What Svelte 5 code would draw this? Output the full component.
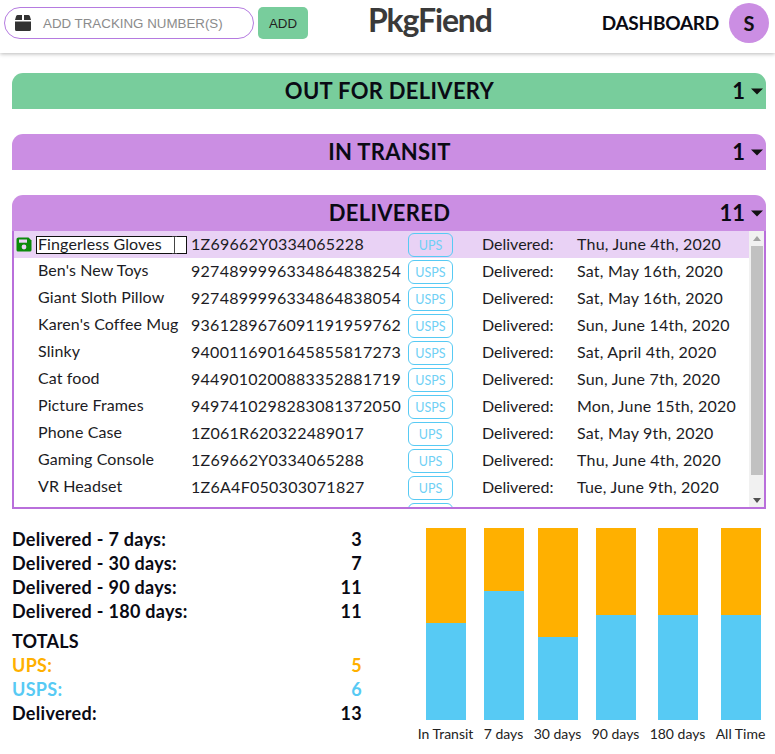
<script>
  const rows = [
    { name: 'Fingerless Gloves', num: '1Z69662Y0334065228', carrier: 'UPS', date: 'Thu, June 4th, 2020' },
    { name: "Ben's New Toys", num: '9274899996334864838254', carrier: 'USPS', date: 'Sat, May 16th, 2020' },
    { name: 'Giant Sloth Pillow', num: '9274899996334864838054', carrier: 'USPS', date: 'Sat, May 16th, 2020' },
    { name: "Karen's Coffee Mug", num: '9361289676091191959762', carrier: 'USPS', date: 'Sun, June 14th, 2020' },
    { name: 'Slinky', num: '9400116901645855817273', carrier: 'USPS', date: 'Sat, April 4th, 2020' },
    { name: 'Cat food', num: '9449010200883352881719', carrier: 'USPS', date: 'Sun, June 7th, 2020' },
    { name: 'Picture Frames', num: '9497410298283081372050', carrier: 'USPS', date: 'Mon, June 15th, 2020' },
    { name: 'Phone Case', num: '1Z061R620322489017', carrier: 'UPS', date: 'Sat, May 9th, 2020' },
    { name: 'Gaming Console', num: '1Z69662Y0334065288', carrier: 'UPS', date: 'Thu, June 4th, 2020' },
    { name: 'VR Headset', num: '1Z6A4F050303071827', carrier: 'UPS', date: 'Tue, June 9th, 2020' }
  ];
  const stats = [
    ['Delivered - 7 days:', 3],
    ['Delivered - 30 days:', 7],
    ['Delivered - 90 days:', 11],
    ['Delivered - 180 days:', 11]
  ];
  const chart = [
    { label: 'In Transit', w: 57, top: 95 },
    { label: '7 days', w: 41, top: 63 },
    { label: '30 days', w: 49, top: 109 },
    { label: '90 days', w: 49, top: 87 },
    { label: '180 days', w: 57, top: 87 },
    { label: 'All Time', w: 51, top: 87 }
  ];
</script>

<div class="page">
  <header>
    <div class="search">
      <svg class="box" viewBox="0 0 16 16" width="16" height="16">
        <path fill="#333" d="M1 1.500Q1.200 0 2.500 0H7V5H0ZM9 0H13.500Q14.800 0 15 1.500L16 5H9ZM0 6.500H16V14.500Q16 16 14.500 16H1.500Q0 16 0 14.500Z"/>
      </svg>
      <span class="ph">ADD TRACKING NUMBER(S)</span>
    </div>
    <button class="add">ADD</button>
    <div class="logo">PkgFiend</div>
    <nav>
      <span class="dash">DASHBOARD</span>
      <span class="avatar">S</span>
    </nav>
  </header>

  <main>
    <section class="bar green"><span class="title">OUT FOR DELIVERY</span><span class="count">1<i></i></span></section>
    <section class="bar purple"><span class="title">IN TRANSIT</span><span class="count">1<i></i></span></section>
    <section class="bar purple open"><span class="title">DELIVERED</span><span class="count">11<i></i></span></section>
    <div class="list">
      <div class="rows">
        {#each rows as r, i}
          <div class="row" class:sel={i === 0}>
            <span class="save">
              {#if i === 0}
                <svg viewBox="0 0 16 15" width="16" height="15">
                  <path fill="#0a8a0a" d="M2.500 0.500H12.500L15.500 3.500V13Q15.500 14.500 14 14.500H2Q0.500 14.500 0.500 13V2Q0.500 0.500 2.500 0.500Z"/>
                  <rect x="3" y="2.500" width="8" height="3.200" fill="#e9d2f5"/>
                  <circle cx="8" cy="10" r="2.400" fill="#e9d2f5"/>
                </svg>
              {/if}
            </span>
            {#if i === 0}
              <span class="name first">
                <span class="edit">{r.name}</span>
                <svg class="ibeam" viewBox="0 0 7 18" width="7" height="18">
                  <path d="M1 .500H2.500Q3.500 .500 3.500 1.500V16.500Q3.500 17.500 2.500 17.500H1M6 .500H4.500Q3.500 .500 3.500 1.500M3.500 16.500Q3.500 17.500 4.500 17.500H6" fill="none" stroke="#444" stroke-width="1"/>
                </svg>
              </span>
            {:else}
              <span class="name">{r.name}</span>
            {/if}
            <span class="num">{r.num}</span>
            <span class="badge">{r.carrier}</span>
            <span class="status">Delivered:</span>
            <span class="date">{r.date}</span>
          </div>
        {/each}
        <div class="row">
          <span class="blank"></span>
          <span class="badge"></span>
        </div>
      </div>
      <div class="scroll">
        <span class="up"></span>
        <span class="thumb"></span>
        <span class="down"></span>
      </div>
    </div>

    <div class="bottom">
      <div class="stats">
        {#each stats as s}
          <div class="stat"><span>{s[0]}</span><span>{s[1]}</span></div>
        {/each}
        <div class="totals">TOTALS</div>
        <div class="stat ups"><span>UPS:</span><span>5</span></div>
        <div class="stat usps"><span>USPS:</span><span>6</span></div>
        <div class="stat"><span>Delivered:</span><span>13</span></div>
      </div>
      <div class="chart">
        {#each chart as c}
          <div class="col" style="width:{c.w}px">
            <div class="stack">
              <div class="seg-top" style="height:{c.top}px"></div>
              <div class="seg-bot"></div>
            </div>
            <span class="lab">{c.label}</span>
          </div>
        {/each}
      </div>
    </div>
  </main>
</div>

<style>
  :global(body) { margin: 0; background: #fff; }
  .page { width: 775px; height: 754px; overflow: hidden; font-family: Lato, "Noto Sans", sans-serif; color: #111; }
  header {
    height: 53px; box-sizing: border-box; display: flex; align-items: center; padding: 0 6px 0 4px;
    box-shadow: 0 1px 4px rgba(0,0,0,.28); position: relative;
  }
  .search {
    width: 250px; height: 32px; box-sizing: border-box; border: 1px solid #b57be0; border-radius: 16px;
    display: flex; align-items: center; padding-left: 10px; margin-top: -7px;
  }
  .box { flex: none; }
  .ph { font: 13.333px "Liberation Sans", Arial, sans-serif; color: #8b8b8b; margin-left: 12px; }
  .add {
    width: 50px; height: 32px; margin: -7px 0 0 4px; border: 0; border-radius: 5px; padding: 0;
    background: #78cd9c; font: 13.333px "Liberation Sans", Arial, sans-serif; color: #222;
  }
  .logo {
    margin-left: 60px; width: 123px; font: 700 32px/1 Lato, sans-serif; color: #3a3a3a; margin-top: -13px;
    letter-spacing: -1.150px; white-space: nowrap;
  }
  nav { margin-left: auto; display: flex; align-items: center; gap: 10px; margin-top: -7px; }
  .dash { font-size: 19px; font-weight: 700; color: #0a0a14; letter-spacing: -.25px; margin-top: -2px; }
  .avatar {
    width: 40px; height: 40px; border-radius: 50%; background: #cb8ee3; display: flex;
    align-items: center; justify-content: center; font-weight: 700; font-size: 20px; color: #111;
  }
  main { padding: 20px 9px 0 12px; }
  .bar {
    height: 36px; border-radius: 11px 11px 0 0; display: flex; align-items: center; justify-content: center;
    position: relative; margin-bottom: 25px;
  }
  .green { background: #78cd9c; }
  .purple { background: #cb8ee3; }
  .open { margin-bottom: 0; }
  .title { font-size: 22px; font-weight: 700; color: #0a0a14; letter-spacing: .3px; margin: -2px 0 0 1px; }
  .count {
    position: absolute; right: 3px; top: 50%; transform: translateY(-50%); font-size: 22px; font-weight: 700;
    display: flex; align-items: center; gap: 6px; color: #0a0a14; margin-top: -1px;
  }
  .count i { width: 0; height: 0; border: 6px solid transparent; border-top: 6px solid #111; border-bottom: 0; margin-top: 2px; }
  .list {
    height: 278px; box-sizing: border-box; border: solid #b96fdb; border-width: 0 2px 2px 2px;
    display: flex; overflow: hidden; background: #fff;
  }
  .rows { flex: 1; min-width: 0; overflow: hidden; }
  .row { height: 27px; display: flex; align-items: center; font-size: 16px; color: #1c1c24; position: relative; }
  .sel { background: #e9d2f5; }
  .save { width: 24px; flex: none; display: flex; padding-left: 2px; box-sizing: border-box; }
  .blank { width: 394px; flex: none; }
  .name { width: 153px; flex: none; white-space: nowrap; display: flex; align-items: center; letter-spacing: .1px; position: relative; margin-top: -4px; }
  .first { margin-top: 0; }
  .edit {
    width: 148px; height: 15px; outline: 1px solid #111; margin: 0 0 0 -1px;
    padding-left: 1px; background: #fff; display: flex; align-items: center; white-space: nowrap; flex: none; line-height: 14px;
  }
  .edit { padding-bottom: 1px; }
  .ibeam { position: absolute; left: 133px; top: -1px; }
  .num { width: 217px; flex: none; letter-spacing: .27px; white-space: nowrap; margin-top: -2px; }
  .badge {
    width: 45px; height: 24px; box-sizing: border-box; flex: none; border: 1px solid #57caf4; border-radius: 6px;
    color: #6fd0f5; font-size: 12.500px; display: flex; align-items: center; justify-content: center; padding-top: 1px;
  }
  .status { margin-left: 29px; width: 95px; flex: none; margin-top: -2px; }
  .date { white-space: nowrap; letter-spacing: .2px; margin-top: -2px; }
  .scroll {
    width: 15px; flex: none; background: #f1f1f1; position: relative;
  }
  .up, .down { width: 0; height: 0; border: 4px solid transparent; position: absolute; left: 4px; }
  .up { top: 5px; border-top: 0; border-bottom: 5px solid #a3a3a3; }
  .down { bottom: 4px; border-bottom: 0; border-top: 5px solid #505050; }
  .thumb { position: absolute; top: 15px; bottom: 32px; left: 2px; right: 1px; background: #c1c1c1; }

  .bottom { display: flex; justify-content: space-between; margin-top: 19px; }
  .stats { width: 350px; font-size: 18px; font-weight: 700; color: #0a0a14; margin-top: -1px; }
  .stat { height: 24px; display: flex; justify-content: space-between; align-items: center; letter-spacing: .3px; }
  .totals { height: 24px; margin-top: 6px; line-height: 24px; letter-spacing: .2px; }
  .ups { color: #ffb000; }
  .usps { color: #57caf4; }
  .chart { display: flex; gap: 9px; }
  .col { display: flex; flex-direction: column; align-items: center; flex: none; }
  .stack { width: 40px; height: 192px; display: flex; flex-direction: column; }
  .seg-top { background: #ffb000; }
  .seg-bot { flex: 1; background: #57caf4; }
  .lab { font-size: 14px; margin-top: 5px; white-space: nowrap; color: #222; line-height: 17px; }
</style>
